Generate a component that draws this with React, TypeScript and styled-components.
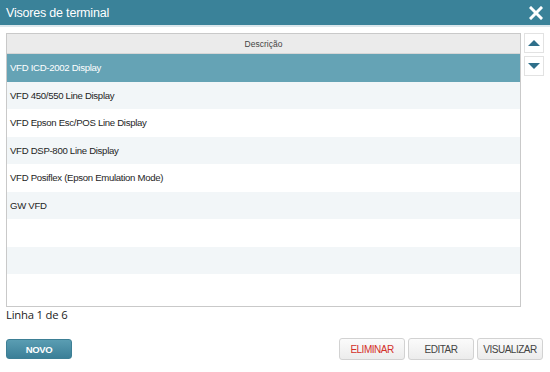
import React from "react"
import styled, { createGlobalStyle } from "styled-components"

const GlobalStyle = createGlobalStyle`
  html, body {
    margin: 0;
    padding: 0;
    background: #fff;
  }
  body {
    font-family: "Liberation Sans", Arial, sans-serif;
    color: #222;
  }
`

const Dialog = styled.div`
  width: 550px;
  height: 372px;
  display: flex;
  flex-direction: column;
  background: #fff;
  overflow: hidden;
`

const TitleBar = styled.div`
  height: 25px;
  flex: none;
  display: flex;
  align-items: center;
  justify-content: space-between;
  padding: 0 7px 0 6px;
  background: #3a8299;
  border-bottom: 2px solid #dbe7ec;
  color: #fff;
`

const Title = styled.h1`
  margin: 0;
  font-family: "Liberation Sans", Arial, sans-serif;
  font-size: 12.5px;
  font-weight: normal;
  letter-spacing: -0.2px;
`

const CloseButton = styled.button`
  border: 0;
  background: none;
  padding: 0;
  width: 14px;
  height: 14px;
  display: flex;
  cursor: pointer;
`

const Body = styled.div`
  display: flex;
  gap: 3px;
  padding: 6px 6px 0 6px;
`

const Table = styled.div`
  flex: 1;
  height: 272px;
  border: 1px solid #c9c9c9;
  display: flex;
  flex-direction: column;
  overflow: hidden;
`

const HeaderCell = styled.div`
  height: 19px;
  flex: none;
  display: flex;
  align-items: center;
  justify-content: center;
  background: #ebebeb;
  border-bottom: 1px solid #d6d6d6;
  font-family: "Liberation Sans", Arial, sans-serif;
  font-size: 8.5px;
  color: #444;
`

const Row = styled.div<{ $alt?: boolean; $selected?: boolean }>`
  height: 27.5px;
  flex: none;
  display: flex;
  align-items: center;
  padding-left: 3px;
  font-family: "Liberation Sans", Arial, sans-serif;
  font-size: 9.6px;
  letter-spacing: -0.3px;
  color: ${(p) => (p.$selected ? "#fff" : "#1e1e1e")};
  background: ${(p) => (p.$selected ? "#65a3b5" : p.$alt ? "#f2f6f8" : "#fff")};
`

const SideButtons = styled.div`
  display: flex;
  flex-direction: column;
  gap: 3px;
`

const ArrowButton = styled.button`
  width: 20px;
  height: 20px;
  padding: 0;
  border: 1px solid #e2e2e2;
  background: #fff;
  display: flex;
  align-items: center;
  justify-content: center;
  cursor: pointer;
`

const Status = styled.div`
  padding: 0 0 0 6px;
  font-size: 11.3px;
  color: #222;
  font-family: "Open Sans", "Liberation Sans", sans-serif;
  letter-spacing: -0.2px;
`

const Footer = styled.div`
  display: flex;
  justify-content: space-between;
  align-items: center;
  padding: 16px 7px 0 6px;
`

const ButtonGroup = styled.div`
  display: flex;
  gap: 3px;
`

const PrimaryButton = styled.button`
  width: 66px;
  height: 20px;
  border: 1px solid #3d7f95;
  border-radius: 3px;
  background: linear-gradient(#5a9db2, #3b7f97);
  color: #fff;
  font-family: "Liberation Sans", Arial, sans-serif;
  font-weight: bold;
  font-size: 9.5px;
  letter-spacing: -0.4px;
  cursor: pointer;
`

const Button = styled.button<{ $danger?: boolean }>`
  width: 66px;
  height: 22px;
  border: 1px solid #d2d2d2;
  border-radius: 3px;
  background: linear-gradient(#fbfbfb, #ececec);
  color: ${(p) => (p.$danger ? "#d3302a" : "#444")};
  font-family: "Liberation Sans", Arial, sans-serif;
  font-size: 10px;
  letter-spacing: -0.5px;
  padding: 0;
  cursor: pointer;
`

const items = [
  "VFD ICD-2002 Display",
  "VFD 450/550 Line Display",
  "VFD Epson Esc/POS Line Display",
  "VFD DSP-800 Line Display",
  "VFD Posiflex (Epson Emulation Mode)",
  "GW VFD",
  "",
  "",
  "",
]

export default function App() {
  return (
    <Dialog>
      <GlobalStyle />
      <TitleBar>
        <Title>Visores de terminal</Title>
        <CloseButton aria-label="Fechar">
          <svg width="14" height="14" viewBox="0 0 14 14">
            <path d="M2 2 L12 12 M12 2 L2 12" stroke="#fff" strokeWidth="3" strokeLinecap="square" />
          </svg>
        </CloseButton>
      </TitleBar>
      <Body>
        <Table>
          <HeaderCell>Descrição</HeaderCell>
          {items.map((label, i) => (
            <Row key={i} $selected={i === 0} $alt={i % 2 === 1}>
              {label}
            </Row>
          ))}
        </Table>
        <SideButtons>
          <ArrowButton aria-label="Subir">
            <svg width="12" height="8" viewBox="0 0 12 8">
              <path d="M0 7 L6 1 L12 7 Z" fill="#2f6f8a" />
            </svg>
          </ArrowButton>
          <ArrowButton aria-label="Descer">
            <svg width="12" height="8" viewBox="0 0 12 8">
              <path d="M0 1 L6 7 L12 1 Z" fill="#2f6f8a" />
            </svg>
          </ArrowButton>
        </SideButtons>
      </Body>
      <Status>Linha 1 de 6</Status>
      <Footer>
        <PrimaryButton>NOVO</PrimaryButton>
        <ButtonGroup>
          <Button $danger>ELIMINAR</Button>
          <Button>EDITAR</Button>
          <Button>VISUALIZAR</Button>
        </ButtonGroup>
      </Footer>
    </Dialog>
  )
}
